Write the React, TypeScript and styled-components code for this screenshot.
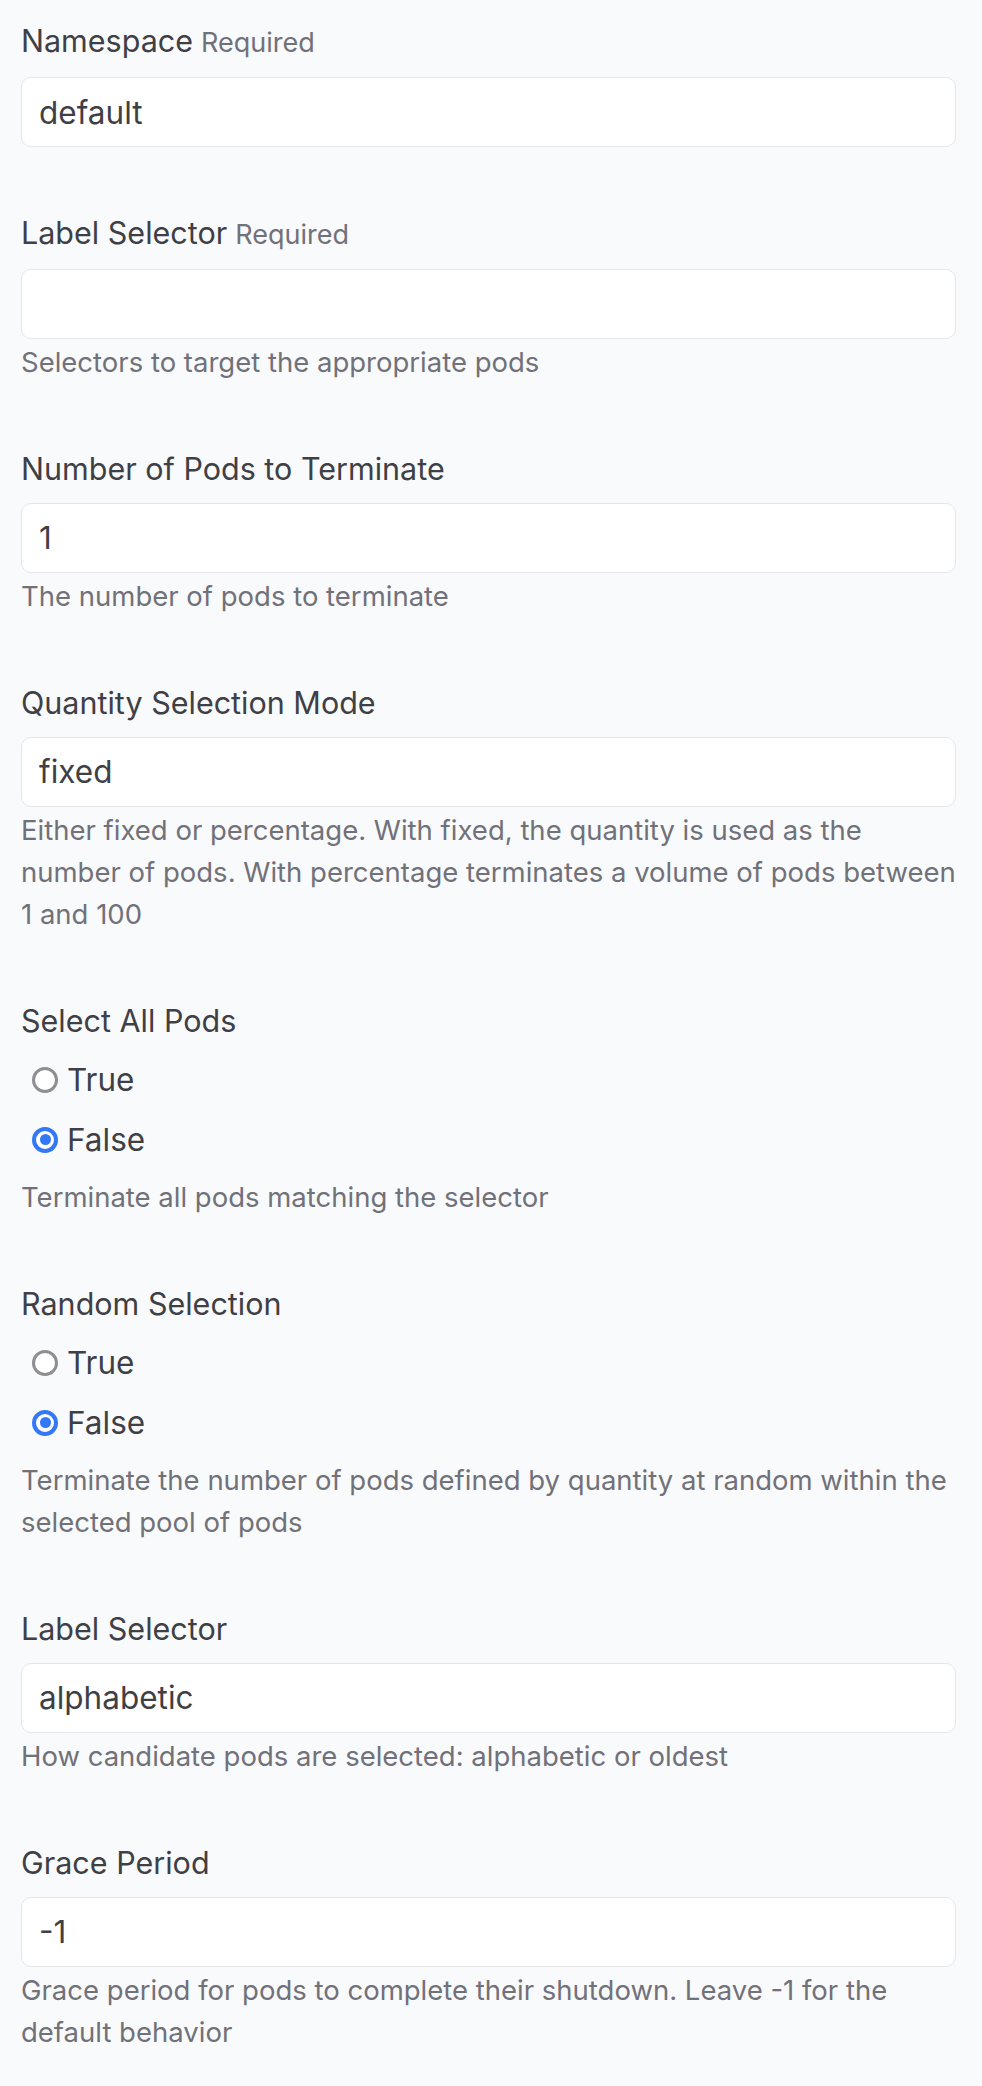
import styled, { createGlobalStyle } from "styled-components"

const GlobalStyle = createGlobalStyle`
  html, body {
    margin: 0;
    padding: 0;
    background: #f9fafb;
  }
  body {
    font-family: Inter, "Noto Sans", "Liberation Sans", sans-serif;
    -webkit-font-smoothing: antialiased;
  }
`

const Form = styled.form`
  display: flex;
  flex-direction: column;
  gap: 65.5px;
  padding: 21px 26px 40px 21px;
  min-height: 2086px;
  box-sizing: border-box;
`

const Field = styled.div`
  display: flex;
  flex-direction: column;
`

const Label = styled.label`
  display: flex;
  align-items: baseline;
  gap: 8px;
  font-size: 30.5px;
  line-height: 40px;
  color: #3f3f46;
  margin-bottom: 14px;
`

const Required = styled.span`
  font-size: 27px;
  color: #71717a;
`

const Input = styled.input`
  box-sizing: border-box;
  width: 100%;
  height: 70px;
  padding: 0 17px;
  border: 1.5px solid #e5e7eb;
  border-radius: 10px;
  background: #ffffff;
  font-family: inherit;
  font-size: 31.5px;
  color: #3f3f46;
  outline: none;
`

const Help = styled.p`
  margin: 2.5px 0 0;
  font-size: 27.5px;
  line-height: 42px;
  color: #71717a;
`

const RadioGroup = styled.div`
  display: flex;
  flex-direction: column;
  margin-top: -5px;
  margin-bottom: 4px;
`

const RadioRow = styled.label`
  display: flex;
  align-items: center;
  gap: 9px;
  height: 60px;
  padding-left: 11px;
  font-size: 31.5px;
  color: #3f3f46;
`

const RadioDot = styled.span<{ $checked: boolean }>`
  box-sizing: border-box;
  width: 26px;
  height: 26px;
  border-radius: 50%;
  background: #ffffff;
  border: ${(p) => (p.$checked ? "4px solid #3478f6" : "3px solid #8e8e93")};
  display: flex;
  align-items: center;
  justify-content: center;

  &::after {
    content: "";
    display: ${(p) => (p.$checked ? "block" : "none")};
    width: 11px;
    height: 11px;
    border-radius: 50%;
    background: #3478f6;
  }
`

type TextField = {
  kind: "text"
  label: string
  required?: boolean
  value: string
  help?: string
}

type BoolField = {
  kind: "bool"
  label: string
  value: boolean
  help: string
}

const FIELDS: (TextField | BoolField)[] = [
  { kind: "text", label: "Namespace", required: true, value: "default" },
  {
    kind: "text",
    label: "Label Selector",
    required: true,
    value: "",
    help: "Selectors to target the appropriate pods",
  },
  {
    kind: "text",
    label: "Number of Pods to Terminate",
    value: "1",
    help: "The number of pods to terminate",
  },
  {
    kind: "text",
    label: "Quantity Selection Mode",
    value: "fixed",
    help: "Either fixed or percentage. With fixed, the quantity is used as the number of pods. With percentage terminates a volume of pods between 1 and 100",
  },
  {
    kind: "bool",
    label: "Select All Pods",
    value: false,
    help: "Terminate all pods matching the selector",
  },
  {
    kind: "bool",
    label: "Random Selection",
    value: false,
    help: "Terminate the number of pods defined by quantity at random within the selected pool of pods",
  },
  {
    kind: "text",
    label: "Label Selector",
    value: "alphabetic",
    help: "How candidate pods are selected: alphabetic or oldest",
  },
  {
    kind: "text",
    label: "Grace Period",
    value: "-1",
    help: "Grace period for pods to complete their shutdown. Leave -1 for the default behavior",
  },
]

export default function App() {
  return (
    <>
      <GlobalStyle />
      <Form onSubmit={(e) => e.preventDefault()}>
        {FIELDS.map((field, i) => (
          <Field key={i}>
            <Label>
              {field.label}
              {field.kind === "text" && field.required && <Required>Required</Required>}
            </Label>
            {field.kind === "text" ? (
              <Input defaultValue={field.value} />
            ) : (
              <RadioGroup>
                {[true, false].map((opt) => (
                  <RadioRow key={String(opt)}>
                    <RadioDot $checked={opt === field.value} />
                    {opt ? "True" : "False"}
                  </RadioRow>
                ))}
              </RadioGroup>
            )}
            {field.help && <Help>{field.help}</Help>}
          </Field>
        ))}
      </Form>
    </>
  )
}
